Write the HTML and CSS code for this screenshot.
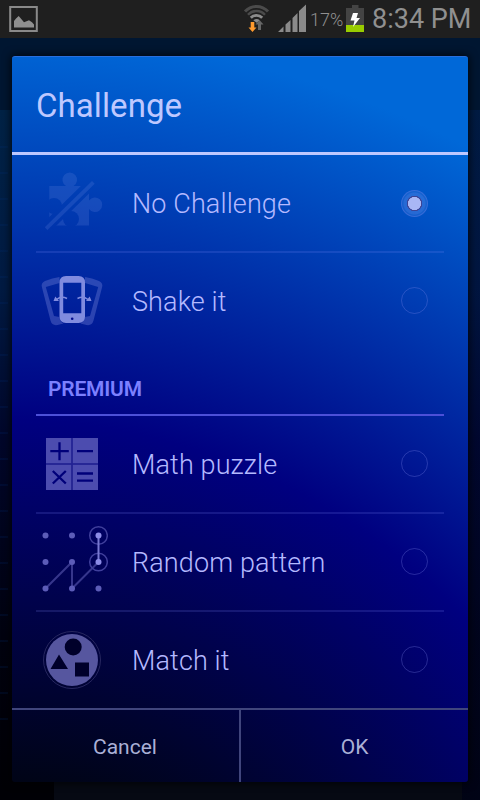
FILE: index.html
```html
<!DOCTYPE html>
<html lang="en">
<head>
<meta charset="utf-8">
<title>Challenge</title>
<link rel="stylesheet" href="styles.css">
</head>
<body>
<div class="screen">
  <header class="status">
    <svg class="shot" width="30" height="28" viewBox="9 5 30 28">
      <rect x="10.2" y="7" width="26.6" height="24" fill="none" stroke="#8a8a8a" stroke-width="2"/>
      <path d="M14 27.500V21l2-2.500 2.700-2.500 3 3.500 2.300 2.700 5-2 3 2 2 2.300v3z" fill="#8f8f8f"/>
    </svg>
    <div class="tray">
      <svg class="wifi" width="28" height="30" viewBox="243 3 28 30">
        <path d="M245 11.500a15.500 15.500 0 0 1 23 0" fill="none" stroke="#4b4b4b" stroke-width="3"/>
        <path d="M248 14.800a11.500 11.500 0 0 1 17 0" fill="none" stroke="#4b4b4b" stroke-width="2.400"/>
        <path d="M250.800 17.800a7.800 7.800 0 0 1 11.400 0" fill="none" stroke="#8c8c8c" stroke-width="2.800"/>
        <path d="M253.300 20.300a4.500 4.500 0 0 1 6.400 0l-3 2.500z" fill="#8c8c8c"/>
        <path d="M250.700 22h3.600v5.500h2.200l-4 4.500-4-4.500h2.200z" fill="#ff9a2e"/>
        <path d="M258 30h3v-5.500h2.500l-4-4.500-4 4.500h2.500z" fill="#666"/>
      </svg>
      <svg class="signal" width="30" height="30" viewBox="277 4 30 30">
        <path d="M278 32l5.500-5.500V32zM285.500 32v-7.500l5-4.500v12zM292.500 32V18l5-5v19zM299 32V11l7-6.500V32z" fill="#8a8a8a"/>
      </svg>
      <span class="percent">17%</span>
      <svg class="battery" width="20" height="28" viewBox="345 5 20 28">
        <path d="M352 5h6.500v3h5.500v24h-18V8h6z" fill="#444"/>
        <path d="M346 25h18v7h-18z" fill="#9c0"/>
        <path d="M353 13h5l-1.500 5h3.500l-7 9 1.500-6.500h-4z" fill="#fff"/>
      </svg>
      <span class="clock">8:34 PM</span>
    </div>
  </header>

  <main class="backdrop">
    <section class="dialog">
      <h1 class="title">Challenge</h1>

      <div class="row">
        <svg class="icon" viewBox="36 155 72 96">
          <mask id="cut">
            <path d="M36 155h72v96H36z" fill="#fff"/>
            <circle cx="54" cy="206" r="8"/>
            <circle cx="71" cy="219" r="8"/>
            <path d="M42 232L100 175" stroke="#000" stroke-width="11"/>
          </mask>
          <g class="puzzle">
            <path mask="url(#cut)" d="M49.300 186H66a7.300 7.300 0 1 1 7.500 0H89v14.500a7.300 7.300 0 1 1 0 8.500v16.500H49.300z"/>
            <path d="M44.800 227.300L92 181l2.700 2.700L47.400 230z"/>
          </g>
        </svg>
        <span class="label">No Challenge</span>
        <span class="radio on"></span>
      </div>

      <div class="row">
        <svg class="icon" viewBox="36 253 72 96">
          <g fill="#7884dc" fill-opacity=".36" fill-rule="evenodd">
            <path d="M59.500 277q-7 1-14.500 4-4.500 2-3 6.500l8.500 33q1.500 5.500 7 4.500l6-1.500q-4-2-4-6.500l-5.500-1L45.800 287l13.700-4z"/>
            <path d="M85 277q7 1 14 4 4.500 2 3 6.500l-8.500 33q-1.500 5.500-7 4.500l-6-1.500q4-2 4-6.500l5.500-1L98.200 287 85 283z"/>
          </g>
          <path d="M66 276h12.500q6.500 0 6.500 6.500v34q0 6.500-6.500 6.500H66q-6.500 0-6.500-6.500v-34q0-6.500 6.500-6.500zM63.200 282.700v30.600H81.300v-30.600z" fill="#808bdf" fill-rule="evenodd"/>
          <circle cx="72.200" cy="318.800" r="1.300" fill="#020c8c"/>
          <g fill="none" stroke="#808bdf" stroke-width="1.500">
            <path d="M67 298.500q-5.500-3-10.500 1M77.500 298.500q5.500-3 10.500 1"/>
          </g>
          <path d="M53.500 301h5.500l-3.700-4.500zM91.500 301H86l3.700-4.500z" fill="#808bdf"/>
        </svg>
        <span class="label">Shake it</span>
        <span class="radio"></span>
      </div>

      <h2 class="section">PREMIUM</h2>

      <div class="row">
        <svg class="icon" viewBox="36 416 72 96">
          <path d="M46 438h25.500v25.500H46zM72.500 438H98v25.500H72.500zM46 464.500h25.500V490H46zM72.500 464.500H98V490H72.500z" fill="#4c4caf"/>
          <path d="M71.500 438h1v52h-1zM46 463.500h52v1H46z" fill="#28289a"/>
          <path d="M50.300 451.200h18.500M59.500 442.200v18M77 451.200h16M52.800 471l13 12.500M65.800 471l-13 12.500M77 473.500h16M77 480.700h16" fill="none" stroke="#00007a" stroke-width="2.300"/>
        </svg>
        <span class="label">Math puzzle</span>
        <span class="radio"></span>
      </div>

      <div class="row">
        <svg class="icon" viewBox="36 514 72 96">
          <path d="M45.500 588.500L72 562v26.500l26.500-26.500" fill="none" stroke="#36368c" stroke-width="2"/>
          <g fill="#5c5cb8">
            <circle cx="45.500" cy="535.500" r="3"/><circle cx="72" cy="535.500" r="3"/>
            <circle cx="45.500" cy="562" r="3"/><circle cx="72" cy="562" r="3"/>
            <circle cx="45.500" cy="588.500" r="3"/><circle cx="72" cy="588.500" r="3"/><circle cx="98.500" cy="588.500" r="3"/>
          </g>
          <g fill="none" stroke="#3f3f9c" stroke-width="1.500">
            <circle cx="98.500" cy="535.500" r="8.800"/><circle cx="98.500" cy="562" r="8.800"/>
          </g>
          <path d="M98.500 535.500V562" stroke="#7878d2" stroke-width="2"/>
          <g fill="#8c8ce6"><circle cx="98.500" cy="535.500" r="3"/><circle cx="98.500" cy="562" r="3"/></g>
        </svg>
        <span class="label">Random pattern</span>
        <span class="radio"></span>
      </div>

      <div class="row">
        <svg class="icon" viewBox="36 612 72 96">
          <circle cx="72" cy="660" r="28.500" fill="none" stroke="#27275f" stroke-width="1"/>
          <circle cx="72" cy="660" r="26" fill="#56569f"/>
          <circle cx="73.200" cy="647" r="8.500" fill="#00002a"/>
          <path d="M59 654.500l9 14.500H50.500zM75 662.500h14v14H75z" fill="#00002a"/>
        </svg>
        <span class="label">Match it</span>
        <span class="radio"></span>
      </div>

      <footer class="actions">
        <button class="action">Cancel</button>
        <button class="action">OK</button>
      </footer>
    </section>
  </main>
</div>
</body>
</html>
```

FILE: styles.css
```css
* { box-sizing: border-box; }

body {
  margin: 0;
  font-family: Roboto, "Liberation Sans", sans-serif;
}

.screen {
  width: 480px;
  height: 800px;
  overflow: hidden;
  background: #000;
}

.status {
  display: flex;
  justify-content: space-between;
  height: 38px;
  padding: 5px 10px 0 9px;
  background: #1f1f1f;
  color: #909090;
}

.tray {
  display: flex;
  height: 30px;
}

.wifi { margin-top: -2px; }
.signal { margin: -1px 0 0 6px; }
.battery { margin-left: 3px; }

.percent {
  width: 32px;
  margin-left: 3px;
  font-size: 18px;
  font-weight: 300;
  line-height: 29px;
  white-space: nowrap;
}

.clock {
  width: 98px;
  margin-left: 7px;
  font-size: 27px;
  line-height: 28px;
  white-space: nowrap;
}

.backdrop {
  height: 762px;
  padding: 18px 12px;
  background:
    linear-gradient(#060913, #060913) 54px 744px / 408px 18px no-repeat,
    linear-gradient(#001631, #001631) 0 0 / 100% 72px no-repeat,
    repeating-linear-gradient(transparent 0 24px, rgba(0, 50, 130, .16) 24px 26px) 0 84px / 8px 620px no-repeat,
    linear-gradient(to right, transparent 50%, rgba(0, 10, 60, .3)),
    linear-gradient(#002245 72px, #001a42 250px, #00062a 400px, #00020f 600px, #000005 750px);
}

.dialog {
  height: 726px;
  border-radius: 3px;
  border-top: 1px solid #2a6fdc;
  background: radial-gradient(circle at -12px 1007px, #000416 282px, #000080 645px, #0068d8 1030px);
  box-shadow: 0 0 8px 1px rgba(0, 0, 0, .75);
}

.title {
  height: 98px;
  margin: 0;
  padding-left: 24px;
  border-bottom: 3px solid #bec8ff;
  color: #bec8ff;
  font-size: 33px;
  font-weight: 400;
  letter-spacing: .08px;
  line-height: 97px;
}

.row {
  display: flex;
  align-items: center;
  height: 96px;
  margin: 0 24px;
}

.row + .row {
  height: 98px;
  border-top: 2px solid rgba(130, 140, 255, .17);
}

.icon {
  width: 72px;
  height: 96px;
}

.puzzle { fill: rgba(120, 150, 235, .18); }

.label {
  flex: 1;
  margin-left: 24px;
  padding-top: 2px;
  color: #b4b9ff;
  font-size: 27px;
  font-weight: 300;
  letter-spacing: .12px;
}

.radio {
  width: 27px;
  height: 27px;
  margin: 0 16px 1px 0;
  border: 1.500px solid rgba(130, 135, 235, .3);
  border-radius: 50%;
}

.radio.on {
  margin-bottom: 0;
  background: radial-gradient(circle, #a9b7f5 0 6.300px, #3c4496 6.800px 7.500px, rgba(110, 150, 240, .35) 8px 10.500px, rgba(110, 150, 240, .2) 11.500px);
}

.section {
  height: 67px;
  margin: 0 24px;
  padding: 0 12px;
  border-bottom: 2px solid #4c50d8;
  color: #7c80ff;
  font-size: 21px;
  font-weight: 600;
  letter-spacing: -.2px;
  line-height: 80px;
}

.actions {
  display: flex;
  height: 74px;
  border-top: 2px solid #40457c;
}

.action {
  width: 227px;
  border: 0;
  padding: 2px 1px 0 0;
  background: none;
  color: #aab0d6;
  font: 400 21px/70px Roboto, "Liberation Sans", sans-serif;
}

.action + .action {
  flex: 1;
  padding-right: 0;
  border-left: 2px solid #40457c;
}
```
